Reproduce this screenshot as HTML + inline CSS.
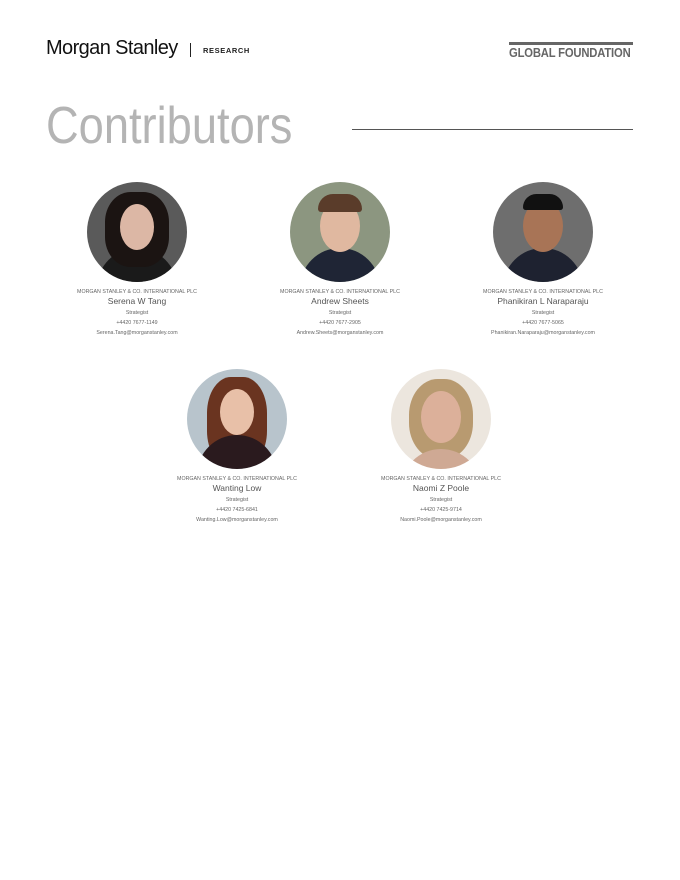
<!DOCTYPE html>
<html><head><meta charset="utf-8"><style>
body{margin:0;width:680px;height:880px;background:#fff;font-family:"Liberation Sans",sans-serif;position:relative;overflow:hidden;color:#555}
.a{position:absolute}
.logo{left:46px;top:37px;font-size:20px;color:#111;letter-spacing:-0.6px}
.sep{left:190px;top:43px;width:1px;height:14px;background:#222}
.res{left:203px;top:46px;font-size:7.5px;font-weight:bold;letter-spacing:0.6px;color:#222}
.gbar{left:509px;top:42px;width:124px;height:3px;background:#666}
.gf{left:509px;top:46px;font-size:12.5px;font-weight:bold;color:#666;letter-spacing:-0.2px;transform:scaleX(0.9);transform-origin:left top;white-space:nowrap}
.title{left:46px;top:96px;font-size:52px;font-weight:normal;color:#b4b4b4;transform:scaleX(0.87);transform-origin:left top;white-space:nowrap}
.line{left:352px;top:129px;width:281px;height:1px;background:#555}
.card{position:absolute;width:200px;text-align:center;color:#666}
.ph{width:100px;height:100px;border-radius:50%;margin:0 auto;overflow:hidden;position:relative}
.co{font-size:5.3px;margin-top:7px;color:#666}
.nm{font-size:8.5px;margin-top:1px;color:#555}
.st{font-size:5.3px;margin-top:4px}
.pn{font-size:5.3px;margin-top:4px}
.em{font-size:5.3px;margin-top:4px}
.head{position:absolute;left:30px;top:18px;width:40px;height:52px;border-radius:50%}
.body{position:absolute;left:10px;top:66px;width:80px;height:50px;border-radius:40px 40px 0 0}
</style></head><body>
<div class="a logo">Morgan Stanley</div>
<div class="a sep"></div>
<div class="a res">RESEARCH</div>
<div class="a gbar"></div>
<div class="a gf">GLOBAL FOUNDATION</div>
<div class="a title">Contributors</div>
<div class="a line"></div>

<div class="card" style="left:37px;top:182px">
<div class="ph" style="background:#5a5a5a"><div class="head" style="background:#d9b8a6"></div><div class="body" style="background:#1a1a1a"></div><div style="position:absolute;left:18px;top:10px;width:64px;height:75px;border-radius:40%;background:#1b1412;z-index:0"></div><div class="head" style="background:#dcb7a5;left:33px;top:22px;width:34px;height:46px"></div></div>
<div class="co">MORGAN STANLEY &amp; CO. INTERNATIONAL PLC</div><div class="nm">Serena W Tang</div><div class="st">Strategist</div><div class="pn">+4420 7677-1149</div><div class="em">Serena.Tang@morganstanley.com</div></div>

<div class="card" style="left:240px;top:182px">
<div class="ph" style="background:#8c9680"><div class="body" style="background:#1f2535"></div><div class="head" style="background:#e0b8a0"></div><div style="position:absolute;left:28px;top:12px;width:44px;height:18px;border-radius:20px 20px 4px 4px;background:#5a3c2a"></div></div>
<div class="co">MORGAN STANLEY &amp; CO. INTERNATIONAL PLC</div><div class="nm">Andrew Sheets</div><div class="st">Strategist</div><div class="pn">+4420 7677-2905</div><div class="em">Andrew.Sheets@morganstanley.com</div></div>

<div class="card" style="left:443px;top:182px">
<div class="ph" style="background:#6e6e6e"><div class="body" style="background:#1e2230"></div><div class="head" style="background:#a87456"></div><div style="position:absolute;left:30px;top:12px;width:40px;height:16px;border-radius:20px 20px 4px 4px;background:#111"></div></div>
<div class="co">MORGAN STANLEY &amp; CO. INTERNATIONAL PLC</div><div class="nm">Phanikiran L Naraparaju</div><div class="st">Strategist</div><div class="pn">+4420 7677-5065</div><div class="em">Phanikiran.Naraparaju@morganstanley.com</div></div>

<div class="card" style="left:137px;top:369px">
<div class="ph" style="background:#b8c4cc"><div style="position:absolute;left:20px;top:8px;width:60px;height:90px;border-radius:40%;background:#6a3420"></div><div class="body" style="background:#2a1a1e"></div><div class="head" style="background:#e8c0a8;left:33px;top:20px;width:34px;height:46px"></div></div>
<div class="co">MORGAN STANLEY &amp; CO. INTERNATIONAL PLC</div><div class="nm">Wanting Low</div><div class="st">Strategist</div><div class="pn">+4420 7425-6841</div><div class="em">Wanting.Low@morganstanley.com</div></div>

<div class="card" style="left:341px;top:369px">
<div class="ph" style="background:#ece6de"><div style="position:absolute;left:18px;top:10px;width:64px;height:80px;border-radius:45%;background:#b89a70"></div><div class="head" style="background:#dcb09a;left:30px;top:22px"></div><div class="body" style="background:#cfa994;top:80px"></div></div>
<div class="co">MORGAN STANLEY &amp; CO. INTERNATIONAL PLC</div><div class="nm">Naomi Z Poole</div><div class="st">Strategist</div><div class="pn">+4420 7425-9714</div><div class="em">Naomi.Poole@morganstanley.com</div></div>
</body></html>
